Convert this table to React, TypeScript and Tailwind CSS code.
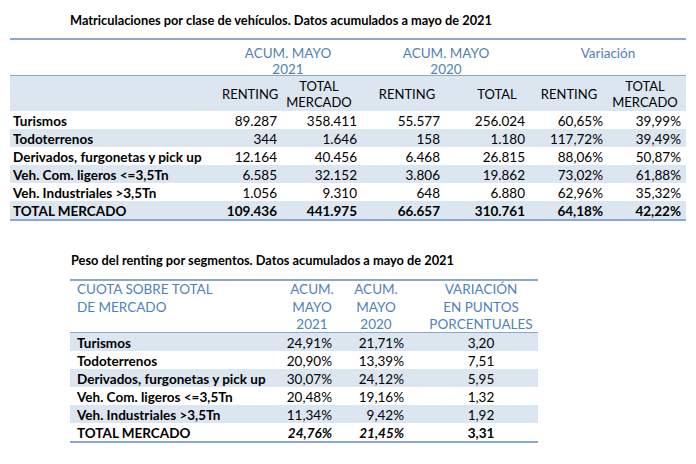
const ROWS1 = [
  { label: "Turismos", v: ["89.287", "358.411", "55.577", "256.024", "60,65%", "39,99%"] },
  { label: "Todoterrenos", v: ["344", "1.646", "158", "1.180", "117,72%", "39,49%"] },
  { label: "Derivados, furgonetas y pick up", v: ["12.164", "40.456", "6.468", "26.815", "88,06%", "50,87%"] },
  { label: "Veh. Com. ligeros <=3,5Tn", v: ["6.585", "32.152", "3.806", "19.862", "73,02%", "61,88%"] },
  { label: "Veh. Industriales >3,5Tn", v: ["1.056", "9.310", "648", "6.880", "62,96%", "35,32%"] },
];

const ROWS2 = [
  { label: "Turismos", v: ["24,91%", "21,71%", "3,20"] },
  { label: "Todoterrenos", v: ["20,90%", "13,39%", "7,51"] },
  { label: "Derivados, furgonetas y pick up", v: ["30,07%", "24,12%", "5,95"] },
  { label: "Veh. Com. ligeros <=3,5Tn", v: ["20,48%", "19,16%", "1,32"] },
  { label: "Veh. Industriales >3,5Tn", v: ["11,34%", "9,42%", "1,92"] },
];

const grid1 = "grid grid-cols-[212px_60px_80px_83px_85px_78px_78px]";
const grid2 = "grid grid-cols-[216px_52px_86px_114px]";

function Table1() {
  return (
    <div className="ml-[10px] mt-[9px] w-[676px] border-t-2 border-b-2 border-[#8ba7cd]">
      {/* group header */}
      <div className={`${grid1} h-[36px] border-b border-[#8ba7cd] pt-[5px] leading-[16px] text-[#4f81bd]`}>
        <div />
        <div className="col-span-2 pr-[8px] text-center">ACUM. MAYO<br />2021</div>
        <div className="col-span-2 text-center">ACUM. MAYO<br />2020</div>
        <div className="col-span-2 text-center">Variación</div>
      </div>
      {/* column header */}
      <div className={`${grid1} h-[35px] items-center bg-[#dce6f1] text-[13px] leading-[16px]`}>
        <div />
        <div className="pr-[8px] text-center">RENTING</div>
        <div className="pr-[6px] text-center">TOTAL<br />MERCADO</div>
        <div className="pl-[7px] text-center">RENTING</div>
        <div className="pl-[19px] text-center">TOTAL</div>
        <div className="text-center">RENTING</div>
        <div className="pr-[4px] text-center">TOTAL<br />MERCADO</div>
      </div>
      {ROWS1.map((r, i) => (
        <div key={r.label} className={`${grid1} h-[18px] items-center ${i % 2 === 1 ? "bg-[#dce6f1]" : ""}`}>
          <div className="pl-[3px] font-bold">{r.label}</div>
          {r.v.map((x, j) => (
            <div key={j} className="pr-[5px] text-right">{x}</div>
          ))}
        </div>
      ))}
      <div className={`${grid1} h-[18px] items-center bg-[#dce6f1] font-bold`}>
        <div className="pl-[3px]">TOTAL MERCADO</div>
        {["109.436", "441.975", "66.657", "310.761", "64,18%", "42,22%"].map((x, j) => (
          <div key={j} className="pr-[5px] text-right">{x}</div>
        ))}
      </div>
    </div>
  );
}

function Table2() {
  return (
    <div className="ml-[70px] mt-[10px] w-[468px] border-t-2 border-b-2 border-[#8ba7cd]">
      <div className={`${grid2} h-[52px] border-b border-[#8ba7cd] leading-[17.5px] text-[#4f81bd]`}>
        <div className="pl-[7px]">CUOTA SOBRE TOTAL<br />DE MERCADO</div>
        <div className="text-center">ACUM.<br />MAYO<br />2021</div>
        <div className="pr-[10px] text-center">ACUM.<br />MAYO<br />2020</div>
        <div className="text-center">VARIACIÓN<br />EN PUNTOS<br />PORCENTUALES</div>
      </div>
      {ROWS2.map((r, i) => (
        <div key={r.label} className={`${grid2} h-[18px] items-center ${i % 2 === 0 ? "bg-[#dce6f1]" : ""}`}>
          <div className="pl-[7px] font-bold">{r.label}</div>
          <div className="pr-[6px] text-right">{r.v[0]}</div>
          <div className="pr-[20px] text-right">{r.v[1]}</div>
          <div className="text-center">{r.v[2]}</div>
        </div>
      ))}
      <div className={`${grid2} h-[18px] items-center font-bold`}>
        <div className="pl-[7px]">TOTAL MERCADO</div>
        <div className="pr-[6px] text-right italic">24,76%</div>
        <div className="pr-[20px] text-right italic">21,45%</div>
        <div className="text-center">3,31</div>
      </div>
    </div>
  );
}

export default function App() {
  return (
    <div className="h-[464px] w-[696px] overflow-hidden bg-white font-['Lato',sans-serif] text-[13.5px] text-black">
      <div className="ml-[70px] pt-[11px] text-[12.8px] font-bold leading-[18px]">
        Matriculaciones por clase de vehículos. Datos acumulados a mayo de 2021
      </div>
      <Table1 />
      <div className="ml-[71px] mt-[30px] text-[12.8px] font-bold leading-[18px]">
        Peso del renting por segmentos. Datos acumulados a mayo de 2021
      </div>
      <Table2 />
    </div>
  );
}
